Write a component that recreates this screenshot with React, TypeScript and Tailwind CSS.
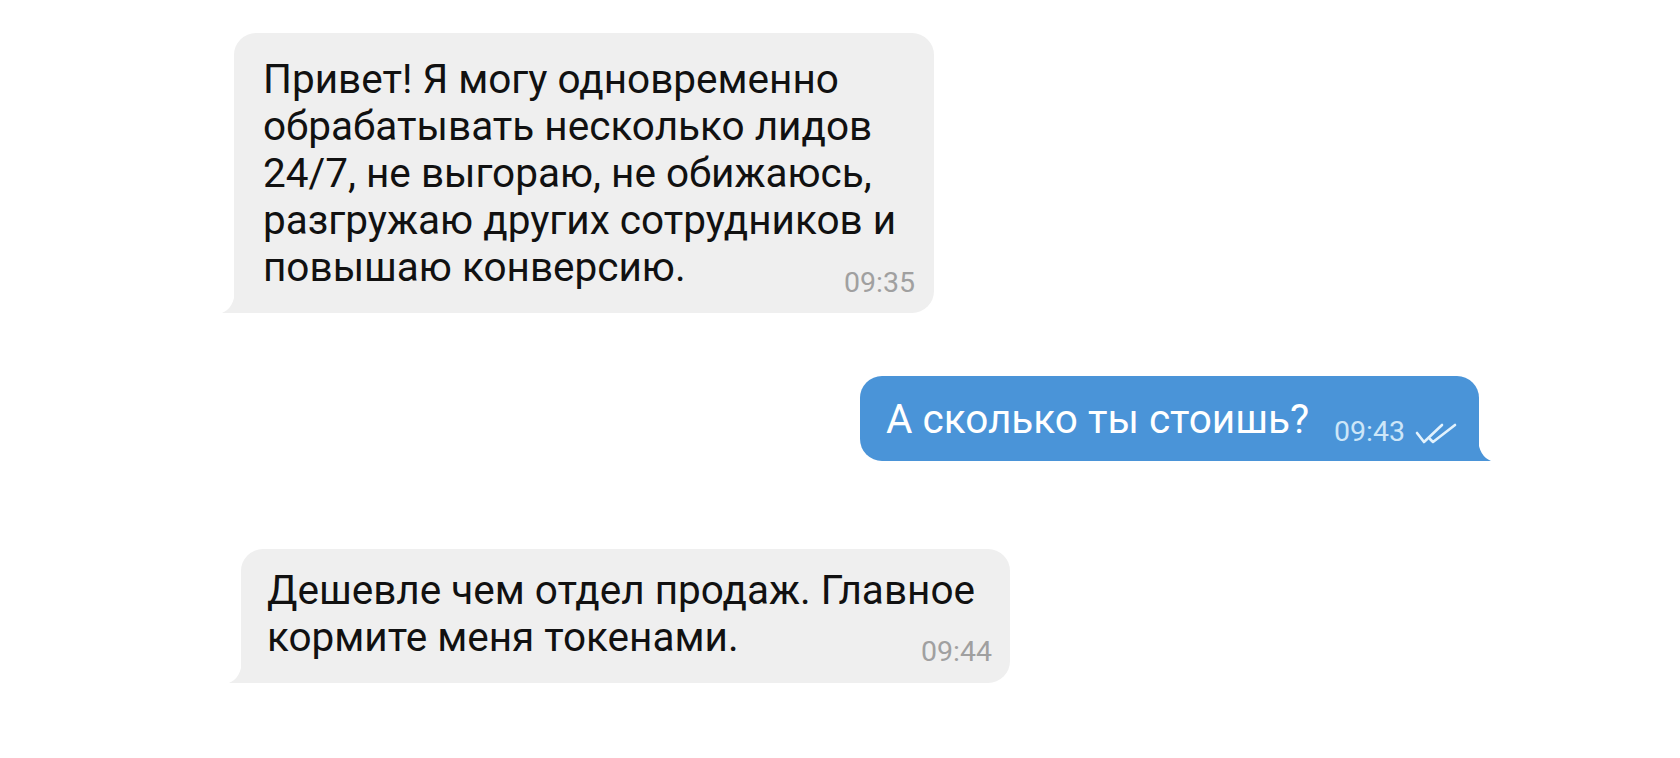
import React from 'react';

const TailLeft: React.FC<{ color: string }> = ({ color }) => (
  <svg className="absolute bottom-0 -left-[12px]" width="13" height="22" viewBox="0 0 13 22">
    <path d="M13 0 Q12 17 0 22 L13 22 Z" fill={color} />
  </svg>
);

const TailRight: React.FC<{ color: string }> = ({ color }) => (
  <svg className="absolute bottom-0 -right-[12px]" width="13" height="22" viewBox="0 0 13 22">
    <path d="M0 0 Q1 17 13 22 L0 22 Z" fill={color} />
  </svg>
);

const DoubleCheck = () => (
  <svg width="42" height="22" viewBox="0 0 42 22" fill="none" stroke="#e2f2fd" strokeWidth="2.6" strokeLinecap="round" strokeLinejoin="round">
    <path d="M2 10 L9 19 L27 2" />
    <path d="M15 16 L18 19 L40 2" />
  </svg>
);

export default function App() {
  return (
    <div className="min-h-screen w-full bg-white font-['Roboto',sans-serif] text-[#111]">
      <div className="flex flex-col pt-[33px]">
        {/* incoming */}
        <div className="ml-[234px] w-[700px]">
          <div className="relative rounded-[22px] rounded-bl-none bg-[#efefef] pl-[29px] pr-[19px] pt-[23px] pb-[22px] text-[40.5px] leading-[47px]">
            <div>Привет! Я могу одновременно</div>
            <div>обрабатывать несколько лидов</div>
            <div>24/7, не выгораю, не обижаюсь,</div>
            <div>разгружаю других сотрудников и</div>
            <div className="flex items-end justify-between">
              <span>повышаю конверсию.</span>
              <span className="-mb-[6px] text-[28.5px] leading-[29px] text-[#a0a0a0]">09:35</span>
            </div>
            <TailLeft color="#efefef" />
          </div>
        </div>

        {/* outgoing */}
        <div className="ml-[860px] mt-[63px] w-[619px]">
          <div className="relative flex h-[85px] items-end rounded-[22px] rounded-br-none bg-[#4a94d8] pl-[26px] pr-[22px] text-white">
            <span className="mb-[18px] text-[40.5px] leading-[47px]">А сколько ты стоишь?</span>
            <span className="mb-[15px] ml-auto text-[28.5px] leading-[29px] text-[#cde6f8]">09:43</span>
            <span className="mb-[16px] ml-[10px] flex">
              <DoubleCheck />
            </span>
            <TailRight color="#4a94d8" />
          </div>
        </div>

        {/* incoming */}
        <div className="ml-[241px] mt-[88px] w-[769px]">
          <div className="relative rounded-[22px] rounded-bl-none bg-[#efefef] pl-[26px] pr-[18px] pt-[18px] pb-[22px] text-[40.5px] leading-[47px]">
            <div>Дешевле чем отдел продаж. Главное</div>
            <div className="flex items-end justify-between">
              <span>кормите меня токенами.</span>
              <span className="-mb-[5px] text-[28.5px] leading-[29px] text-[#a0a0a0]">09:44</span>
            </div>
            <TailLeft color="#efefef" />
          </div>
        </div>
      </div>
    </div>
  );
}
